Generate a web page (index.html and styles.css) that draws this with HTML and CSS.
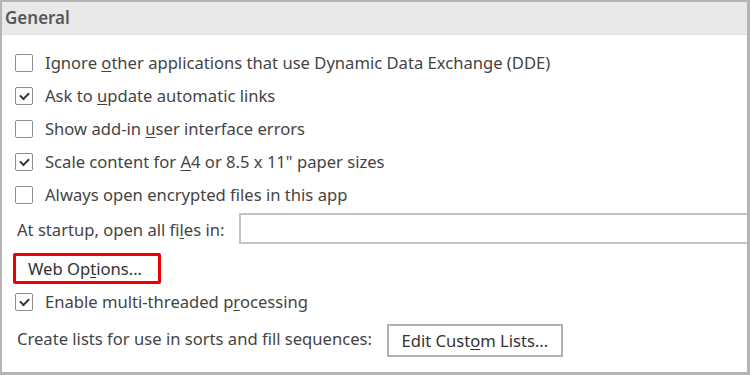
FILE: index.html
```html
<!DOCTYPE html>
<html lang="en">
<head>
    <meta charset="UTF-8">
    <title>General Options</title>
    <link rel="stylesheet" href="styles.css">
</head>
<body>
    <div class="panel">
        <div class="panel-header">General</div>

        <div class="panel-body">
            <label class="option">
                <span class="check"></span>
                <span>Ignore <u>o</u>ther applications that use Dynamic Data Exchange (DDE)</span>
            </label>
            <label class="option">
                <span class="check checked"></span>
                <span>Ask to <u>u</u>pdate automatic links</span>
            </label>
            <label class="option">
                <span class="check"></span>
                <span>Show add-in <u>u</u>ser interface errors</span>
            </label>
            <label class="option">
                <span class="check checked"></span>
                <span>Scale content for <u>A</u>4 or 8.5 x 11" paper sizes</span>
            </label>
            <label class="option">
                <span class="check"></span>
                <span>Always open encrypted files in this app</span>
            </label>

            <div class="startup-row">
                <span>At startup, open all fi<u>l</u>es in:</span>
                <div class="text-box"></div>
            </div>

            <div class="web-row">
                <div class="highlight">
                    <button class="btn-plain">Web Op<u>t</u>ions...</button>
                </div>
            </div>

            <label class="option">
                <span class="check checked"></span>
                <span>Enable multi-threaded p<u>r</u>ocessing</span>
            </label>

            <div class="lists-row">
                <span>Create lists for use in sorts and fill sequences:</span>
                <button class="btn">Edit Cust<u>o</u>m Lists...</button>
            </div>
        </div>
    </div>
</body>
</html>
```

FILE: styles.css
```css
body {
    margin: 0;
    background-color: #ffffff;
    font-family: "Noto Sans", "Open Sans", sans-serif;
    font-size: 16.6px;
    color: #444444;
}

.panel {
    width: 750px;
    height: 375px;
    box-sizing: border-box;
    border: 2px solid #b4b4b4;
    border-right-width: 3px;
    border-bottom-width: 3px;
    display: flex;
    flex-direction: column;
}

.panel-header {
    height: 33px;
    background-color: #e9e9e9;
    border-bottom: 1px solid #e2e2e2;
    padding-left: 3px;
    font-size: 17px;
    font-weight: 600;
    color: #585858;
    line-height: 31px;
    box-sizing: border-box;
}

.panel-body {
    display: flex;
    flex-direction: column;
    padding: 11px 0 0 13px;
}

u {
    text-decoration-thickness: 1px;
    text-underline-offset: 2px;
}

.option {
    display: flex;
    align-items: center;
    gap: 12px;
    height: 33px;
}

.check {
    width: 16px;
    height: 16px;
    border: 1px solid #8e8e8e;
    border-radius: 2px;
    background-color: #ffffff;
    position: relative;
    flex-shrink: 0;
}

.check.checked::after {
    content: "";
    position: absolute;
    left: 4px;
    top: 2px;
    width: 7px;
    height: 4px;
    border-left: 2px solid #333333;
    border-bottom: 2px solid #333333;
    transform: translateY(2px) rotate(-45deg);
}

.startup-row {
    display: flex;
    align-items: center;
    gap: 15px;
    height: 37px;
    margin-left: 2px;
}

.text-box {
    flex: 1;
    height: 31px;
    box-sizing: border-box;
    border: 2px solid #c4c4c4;
    border-right: none;
    margin-top: -2px;
}

.web-row {
    display: flex;
    height: 37px;
    align-items: flex-start;
}

.highlight {
    border: 3px solid #ee0000;
    border-radius: 2px;
    width: 148px;
    height: 31px;
    box-sizing: border-box;
    margin-left: -2px;
    margin-top: 5px;
    display: flex;
    align-items: center;
}

.btn-plain {
    background: none;
    border: none;
    font-family: inherit;
    font-size: 16.6px;
    color: #333333;
    padding: 0 0 0 12px;
}

.lists-row {
    display: flex;
    align-items: center;
    gap: 15px;
    height: 40px;
    margin-left: 2px;
}

.btn {
    background-color: #ffffff;
    border: 2px solid #b2b2b2;
    font-family: inherit;
    font-size: 16.6px;
    color: #333333;
    height: 33px;
    width: 176px;
    padding: 0;
    margin-top: 4px;
}
```
